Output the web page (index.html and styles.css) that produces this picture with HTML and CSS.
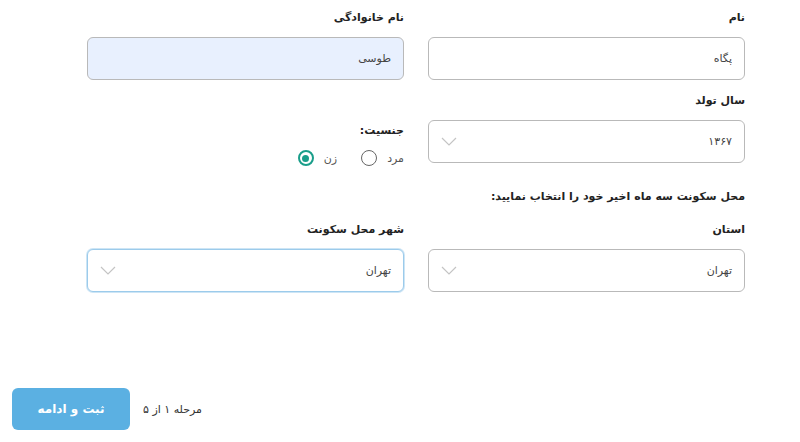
FILE: index.html
```html
<!DOCTYPE html>
<html lang="fa" dir="rtl">
<head>
    <meta charset="UTF-8">
    <meta name="viewport" content="width=device-width, initial-scale=1.0">
    <title>اطلاعات شخصی</title>
    <link rel="stylesheet" href="styles.css">
</head>
<body>
    <form class="form" onsubmit="event.preventDefault()">
        <div class="grid">
            <div class="field">
                <label class="label" for="fname">نام</label>
                <input class="input" type="text" id="fname" value="پگاه">
            </div>
            <div class="field">
                <label class="label" for="lname">نام خانوادگی</label>
                <input class="input input-filled" type="text" id="lname" value="طوسی">
            </div>

            <div class="field">
                <span class="label">سال تولد</span>
                <div class="select">
                    <span>۱۳۶۷</span>
                    <svg class="chevron" width="16" height="9" viewBox="0 0 16 9"><path d="M1 1l7 7 7-7" fill="none" stroke="#c4c4c4" stroke-width="1.2"/></svg>
                </div>
            </div>
            <div class="field gender">
                <span class="label">جنسیت:</span>
                <div class="radios">
                    <label class="radio">
                        <span>مرد</span>
                        <span class="circle"></span>
                    </label>
                    <label class="radio">
                        <span>زن</span>
                        <span class="circle checked"></span>
                    </label>
                </div>
            </div>
        </div>

        <p class="hint">محل سکونت سه ماه اخیر خود را انتخاب نمایید:</p>

        <div class="grid">
            <div class="field">
                <span class="label">استان</span>
                <div class="select">
                    <span>تهران</span>
                    <svg class="chevron" width="16" height="9" viewBox="0 0 16 9"><path d="M1 1l7 7 7-7" fill="none" stroke="#c4c4c4" stroke-width="1.2"/></svg>
                </div>
            </div>
            <div class="field">
                <span class="label">شهر محل سکونت</span>
                <div class="select select-focus">
                    <span>تهران</span>
                    <svg class="chevron" width="16" height="9" viewBox="0 0 16 9"><path d="M1 1l7 7 7-7" fill="none" stroke="#c4c4c4" stroke-width="1.2"/></svg>
                </div>
            </div>
        </div>

        <div class="footer">
            <span class="step">مرحله ۱ از ۵</span>
            <button class="btn" type="submit">ثبت و ادامه</button>
        </div>
    </form>
</body>
</html>
```

FILE: styles.css
```css
* {
    margin: 0;
    padding: 0;
    box-sizing: border-box;
}

body {
    font-family: "DejaVu Sans", sans-serif;
    color: #333;
    background: #fff;
    direction: rtl;
}

.form {
    padding-top: 8px;
}

.grid {
    display: grid;
    grid-template-columns: 317px 317px;
    column-gap: 24px;
    row-gap: 11px;
    margin-right: 55px;
}

.field {
    display: flex;
    flex-direction: column;
}

.label {
    font-size: 11px;
    font-weight: bold;
    line-height: 20px;
    margin-bottom: 9px;
    color: #222;
}

.input,
.select {
    height: 43px;
    border: 1px solid #b9b9b9;
    border-radius: 6px;
    padding: 0 12px;
    font-family: inherit;
    font-size: 11px;
    color: #444;
    background: #fff;
    outline: none;
}

.input-filled {
    background: #e8f0fe;
}

.select {
    display: flex;
    align-items: center;
    justify-content: space-between;
}

.select-focus {
    border-color: #9ccbeb;
    box-shadow: 0 0 0 1px rgba(156, 203, 235, 0.5);
}

.gender {
    padding-top: 30px;
    margin-bottom: -3px;
}

.radios {
    display: flex;
    gap: 24px;
}

.radio {
    display: flex;
    align-items: center;
    gap: 10px;
    font-size: 11px;
    color: #555;
}

.circle {
    width: 16px;
    height: 16px;
    border: 1.5px solid #666;
    border-radius: 50%;
    display: flex;
    align-items: center;
    justify-content: center;
}

.circle.checked {
    border: 2px solid #1a9e8a;
}

.circle.checked::after {
    content: "";
    width: 7px;
    height: 7px;
    border-radius: 50%;
    background: #1a9e8a;
}

.hint {
    font-size: 11px;
    font-weight: bold;
    line-height: 20px;
    color: #222;
    margin: 24px 55px 13px 0;
}

.footer {
    display: flex;
    align-items: center;
    justify-content: flex-end;
    gap: 13px;
    margin-top: 96px;
    padding-left: 12px;
}

.step {
    font-size: 11px;
    color: #333;
}

.btn {
    width: 118px;
    height: 42px;
    border: none;
    border-radius: 6px;
    background: #5bb0e2;
    color: #fff;
    font-family: inherit;
    font-size: 12px;
    font-weight: bold;
    cursor: pointer;
}
```
